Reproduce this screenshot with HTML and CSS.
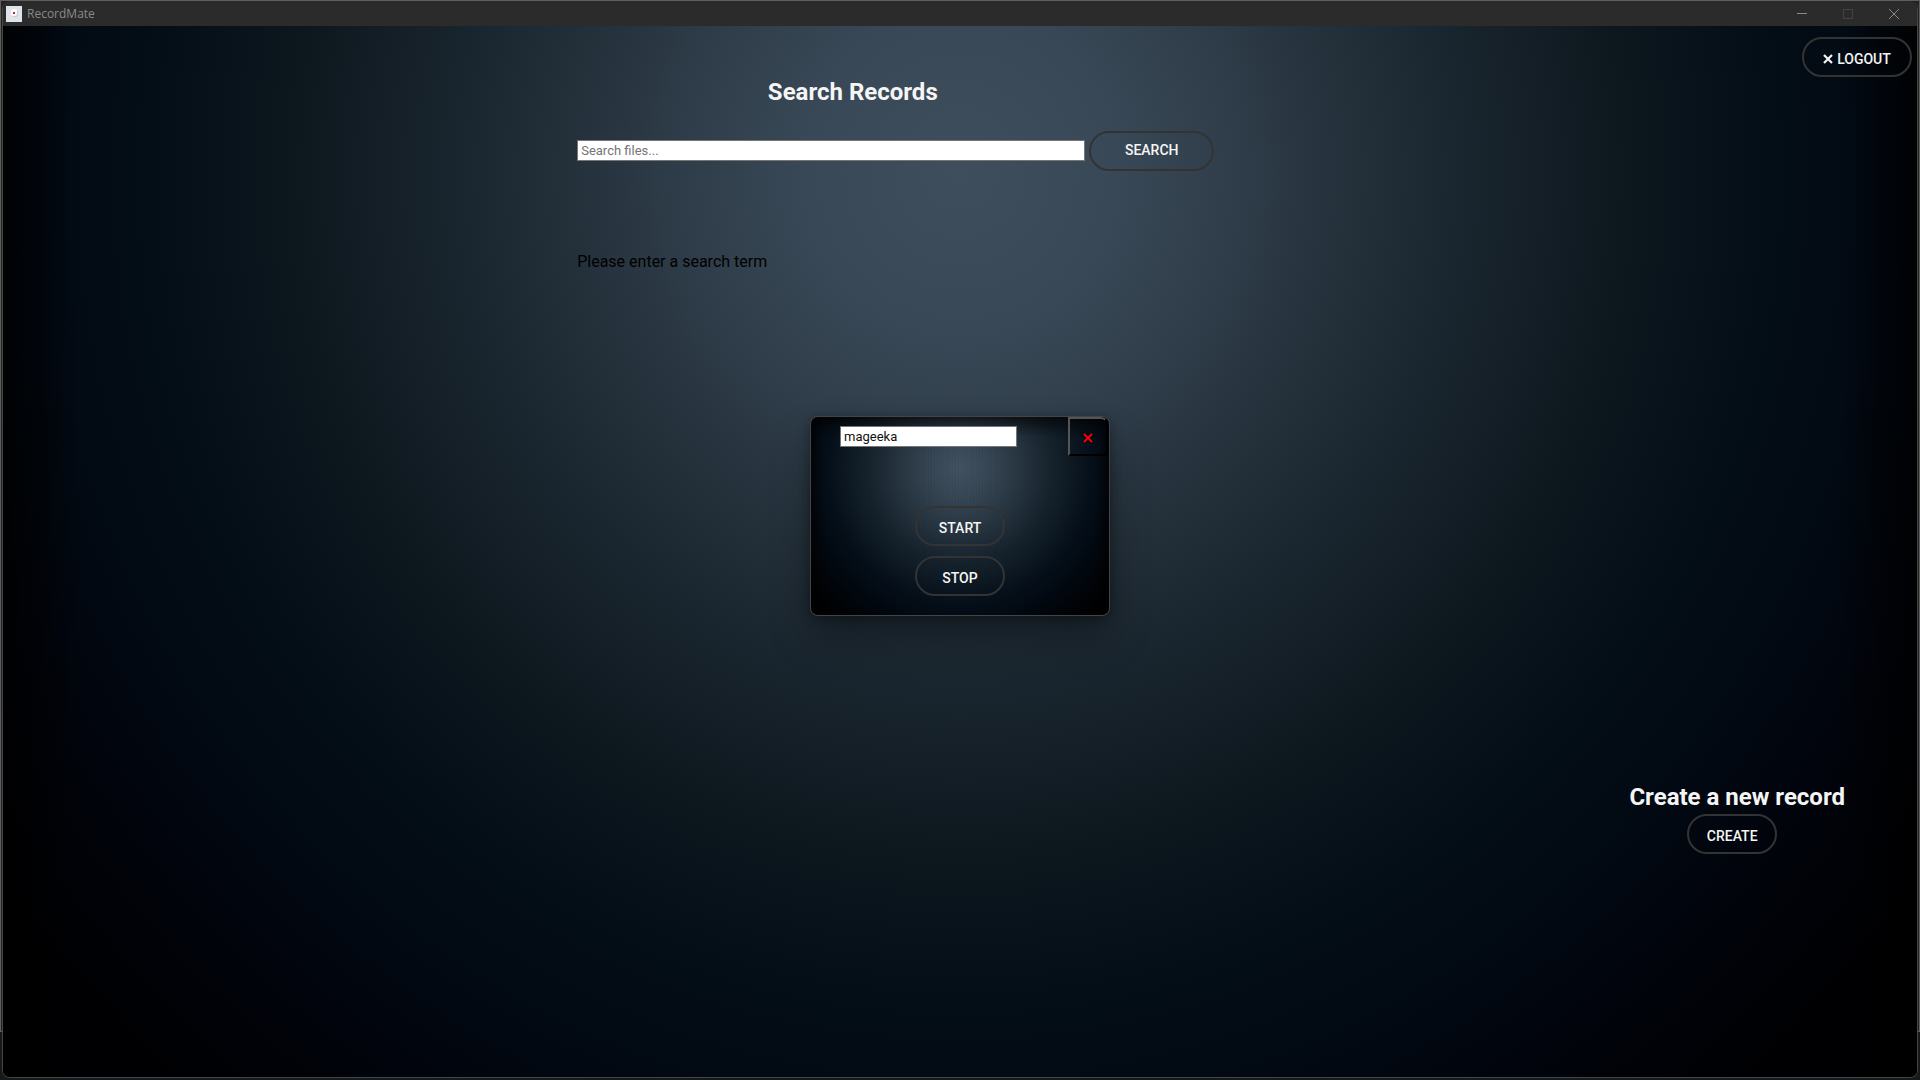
FILE: index.html
```html
<!DOCTYPE html>
<html lang="en">
<head>
<meta charset="utf-8">
<title>RecordMate</title>
<link rel="stylesheet" href="styles.css">
</head>
<body>
<div class="rear-window"></div>
<div class="window">
  <header class="titlebar">
    <svg class="app-icon" width="16" height="16" viewBox="0 0 16 16" aria-hidden="true">
      <rect width="16" height="16" fill="#dfe3ea"/>
      <rect x="6" y="4" width="6" height="7" rx="2" fill="#c6cad2"/>
      <rect x="5" y="3" width="6" height="7" rx="2" fill="#fafbfd"/>
      <rect x="7" y="6" width="2" height="2" fill="#e8123f"/>
    </svg>
    <span class="app-name">RecordMate</span>
    <button class="win-button" aria-label="Minimize"><svg width="10" height="10" viewBox="0 0 10 10"><path d="M0 4.500h10" stroke="#8a8a8a"/></svg></button>
    <button class="win-button" aria-label="Maximize" disabled><svg width="10" height="10" viewBox="0 0 10 10"><rect x=".5" y=".5" width="9" height="9" fill="none" stroke="#434343"/></svg></button>
    <button class="win-button" aria-label="Close"><svg width="10" height="10" viewBox="0 0 10 10"><path d="M0 0l10 10M10 0L0 10" stroke="#8a8a8a"/></svg></button>
  </header>
  <main class="content">
    <div class="toolbar">
      <button class="pill pill-logout"><svg width="10" height="10" viewBox="0 0 10 10" aria-hidden="true"><path d="M1 1l8 8M9 1L1 9" stroke="#f5f5f5" stroke-width="2.200"/></svg>LOGOUT</button>
    </div>
    <section class="search">
      <h1 class="heading search-heading">Search Records</h1>
      <form class="search-form">
        <input class="field search-field" type="text" placeholder="Search files..." aria-label="Search files">
        <button class="pill pill-search" type="button">SEARCH</button>
      </form>
      <p class="message">Please enter a search term</p>
    </section>
    <section class="create">
      <h2 class="heading">Create a new record</h2>
      <button class="pill pill-create">CREATE</button>
    </section>
  </main>
  <div class="recorder" role="dialog" aria-label="Recorder">
    <div class="recorder-top">
      <input class="field name-field" type="text" value="mageeka" aria-label="Record name">
      <button class="recorder-close" aria-label="Close"><svg width="10" height="10" viewBox="0 0 10 10"><path d="M1 1l8 8M9 1L1 9" stroke="#f00" stroke-width="1.800"/></svg></button>
    </div>
    <div class="recorder-actions">
      <button class="pill">START</button>
      <button class="pill">STOP</button>
    </div>
  </div>
</div>
</body>
</html>
```
FILE: styles.css
```css
* { box-sizing: border-box; }

body {
  margin: 0;
  min-height: 100vh;
  padding: 1px 2px 2px;
  display: flex;
  background: #14191b;
  font-family: Roboto, "Liberation Sans", sans-serif;
  font-size: 16px;
}

.rear-window {
  position: absolute;
  inset: 0 0 48px;
  border: 1px solid #5e5e5e;
  background: #222;
}

.window {
  position: relative;
  flex: 1;
  display: flex;
  flex-direction: column;
  border: 1px solid #454545;
  border-top: 0;
  border-radius: 8px;
  overflow: hidden;
  background: #000;
}

.titlebar {
  display: flex;
  align-items: center;
  height: 25px;
  padding-left: 3px;
  background: #2b2b2b;
}

.app-name {
  flex: 1;
  margin-left: 5px;
  color: #8a8a8a;
  font: 12px/16px "Open Sans", "Noto Sans", sans-serif;
}

.win-button {
  display: flex;
  align-items: center;
  justify-content: center;
  width: 46px;
  height: 24px;
  padding: 0;
  border: 0;
  background: none;
}

.content {
  flex: 1;
  display: flex;
  flex-direction: column;
  background:
    linear-gradient(90deg, rgba(0, 0, 0, .8), transparent 4%, transparent 96%, rgba(0, 0, 0, .8)),
    radial-gradient(ellipse 58% 108% at 50% 14%,
      #3f4e5c 0%, #394856 14%, #2f3d4a 25%, #232f39 36%, #1a262f 45%,
      #0d171e 60%, #040e17 73%, #020a14 82%, #01040c 93%, #000002 108%);
}

.toolbar {
  display: flex;
  justify-content: flex-end;
  padding: 11px 5px 0 0;
}

.pill {
  display: flex;
  align-items: center;
  justify-content: center;
  width: 90px;
  height: 40px;
  padding: 3px 0 0;
  border: 2px solid #333;
  border-radius: 20px;
  background: none;
  color: #f5f5f5;
  font: 500 14px/16px Roboto, "Liberation Sans", sans-serif;
}

.pill-logout { width: 110px; gap: 4px; }

.pill-search { width: 125px; padding: 0 0 2px; }

.pill-create { margin: 2px 10px 0 0; }

.heading {
  margin: 0;
  color: #f5f5f5;
  font-size: 24px;
  line-height: 30px;
  text-align: center;
}

.search { margin-left: 30%; width: 40%; }

.search-heading { width: 72%; }

.search-form {
  display: flex;
  align-items: center;
  gap: 4px;
  margin-top: 24px;
}

.field {
  height: 21px;
  padding: 1px 3px;
  border: 1px solid #767676;
  border-radius: 0;
  background: #fff;
  color: #111;
  font: 13px/16px Roboto, "Liberation Sans", sans-serif;
}

.field::placeholder { color: #757575; }

.search-field { width: 508px; margin-bottom: 2px; }

.message {
  margin: 81px 0 0;
  color: #000;
  line-height: 20px;
}

.create {
  display: flex;
  flex-direction: column;
  align-items: center;
  align-self: flex-end;
  margin: auto 72px 223px 0;
}

.recorder {
  position: absolute;
  top: 415px;
  left: 50%;
  transform: translateX(-50%);
  width: 300px;
  border: 1px solid #444;
  border-radius: 8px;
  overflow: hidden;
  background:
    repeating-linear-gradient(90deg, rgba(0, 0, 0, .04) 0 1px, transparent 1px 3px),
    linear-gradient(rgba(0, 0, 0, .6), transparent 20px),
    linear-gradient(90deg, rgba(0, 0, 0, .5), transparent 5%, transparent 95%, rgba(0, 0, 0, .5)),
    radial-gradient(ellipse 60% 92% at 50% 26%,
      #425262 0%, #384755 15%, #273541 34%, #15222c 52%,
      #050f19 74%, #020811 86%, #000 108%);
  box-shadow: 0 24px 40px rgba(0, 0, 0, .3), 0 2px 12px rgba(0, 0, 0, .35);
}

.recorder-top {
  display: flex;
  justify-content: space-between;
  padding: 0 1px 0 29px;
}

.name-field { width: 177px; margin-top: 9px; }

.recorder-close {
  display: flex;
  align-items: center;
  justify-content: center;
  width: 40px;
  height: 39px;
  padding: 2px 0 0;
  border: 2px solid;
  border-color: #555 #000 #000 #555;
  border-radius: 0 7px 0 0;
  background: none;
}

.recorder-actions {
  display: flex;
  flex-direction: column;
  align-items: center;
  gap: 10px;
  padding: 50px 0 19px;
}
```
